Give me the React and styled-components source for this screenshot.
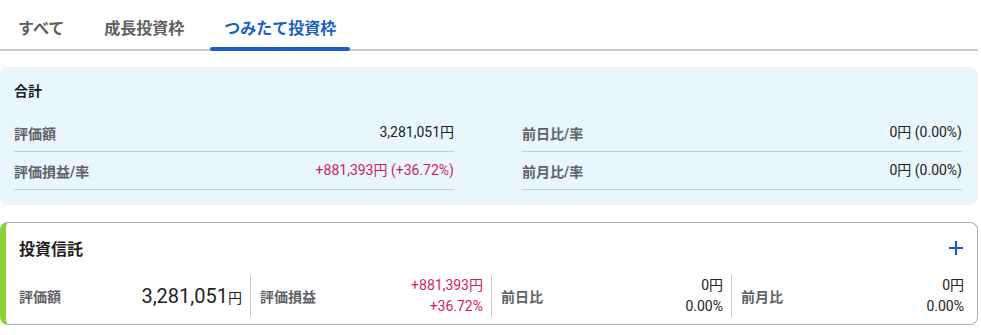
import React from 'react'
import styled, { createGlobalStyle } from 'styled-components'

const GlobalStyle = createGlobalStyle`
  body {
    margin: 0;
    background: #fff;
    font-family: Roboto, "Noto Sans CJK JP", sans-serif;
    color: #222;
  }
`

const tabs = ['すべて', '成長投資枠', 'つみたて投資枠']

const summary = [
  { label: '評価額', value: '3,281,051円' },
  { label: '前日比/率', value: '0円 (0.00%)' },
  { label: '評価損益/率', value: '+881,393円 (+36.72%)', plus: true },
  { label: '前月比/率', value: '0円 (0.00%)' }
]

const PlusIcon = () => (
  <svg width="16" height="16" viewBox="0 0 16 16">
    <path d="M8 1v14M1 8h14" stroke="#1a5fc9" strokeWidth="2.2" fill="none" />
  </svg>
)

const App = () => {
  return (
    <Page>
      <GlobalStyle />
      <TabBar>
        {tabs.map((t, i) => (
          <Tab key={t} active={i === 2}>{t}</Tab>
        ))}
      </TabBar>

      <SummaryCard>
        <div className="heading">合計</div>
        <SummaryGrid>
          {summary.map(s => (
            <SummaryRow key={s.label}>
              <span className="label">{s.label}</span>
              <Value plus={s.plus}>{s.value}</Value>
            </SummaryRow>
          ))}
        </SummaryGrid>
      </SummaryCard>

      <FundCard>
        <div className="title-row">
          <span className="title">投資信託</span>
          <PlusIcon />
        </div>
        <Metrics>
          <Metric>
            <span className="label">評価額</span>
            <BigValue>3,281,051<small>円</small></BigValue>
          </Metric>
          <Metric>
            <span className="label">評価損益</span>
            <Value plus>
              <div>+881,393円</div>
              <div>+36.72%</div>
            </Value>
          </Metric>
          <Metric>
            <span className="label">前日比</span>
            <Value>
              <div>0円</div>
              <div>0.00%</div>
            </Value>
          </Metric>
          <Metric>
            <span className="label">前月比</span>
            <Value>
              <div>0円</div>
              <div>0.00%</div>
            </Value>
          </Metric>
        </Metrics>
      </FundCard>
    </Page>
  )
}

const Page = styled.div`
  width: 978px;
`

const TabBar = styled.div`
  display: flex;
  gap: 12px;
  padding-left: 4px;
  border-bottom: 2px solid #c8cdd5;
`

const Tab = styled.div`
  position: relative;
  padding: 17px 14px 8px;
  font-size: 16px;
  line-height: 24px;
  font-weight: 700;
  color: ${p => (p.active ? '#1a5fc9' : '#5c5f63')};
  &::after {
    content: '';
    display: ${p => (p.active ? 'block' : 'none')};
    position: absolute;
    left: 0;
    right: 0;
    bottom: -2px;
    height: 4px;
    border-radius: 2px;
    background: #1a5fc9;
  }
`

const SummaryCard = styled.div`
  margin-top: 16px;
  background: #e9f6fd;
  border-radius: 8px;
  padding: 14px 16px 15px 14px;
  .heading {
    font-size: 14px;
    line-height: 20px;
    font-weight: 700;
    color: #1e1e1e;
    margin-bottom: 13px;
  }
`

const SummaryGrid = styled.div`
  display: grid;
  grid-template-columns: 1fr 1fr;
  column-gap: 68px;
`

const SummaryRow = styled.div`
  display: flex;
  align-items: center;
  justify-content: space-between;
  height: 37px;
  border-bottom: 1px solid #c3ced8;
  font-size: 14px;
  .label {
    font-weight: 700;
    color: #5f6266;
  }
`

const Value = styled.div`
  font-size: 14px;
  line-height: 21px;
  color: ${p => (p.plus ? '#cf1c5c' : '#222')};
  text-align: right;
  white-space: nowrap;
`

const FundCard = styled.div`
  margin-top: 17px;
  border: 1px solid #a9aeb4;
  border-left: 6px solid #8dd137;
  border-radius: 8px;
  padding: 13px 13px 7px 13px;
  .title-row {
    display: flex;
    align-items: center;
    justify-content: space-between;
    height: 24px;
    margin-bottom: 15px;
  }
  .title {
    font-size: 16px;
    font-weight: 700;
    color: #1e1e1e;
  }
`

const Metrics = styled.div`
  display: grid;
  grid-template-columns: 231px 241px 240px 1fr;
`

const Metric = styled.div`
  display: flex;
  align-items: center;
  justify-content: space-between;
  height: 42px;
  padding: 0 8px 0 9px;
  border-left: 1px solid #c3c7cc;
  &:first-child {
    border-left: none;
    padding-left: 0;
  }
  &:last-child {
    padding-right: 0;
  }
  .label {
    font-size: 14px;
    font-weight: 700;
    color: #5f6266;
  }
`

const BigValue = styled.div`
  font-size: 20px;
  color: #1e1e1e;
  small {
    font-size: 14px;
  }
`

export default App
